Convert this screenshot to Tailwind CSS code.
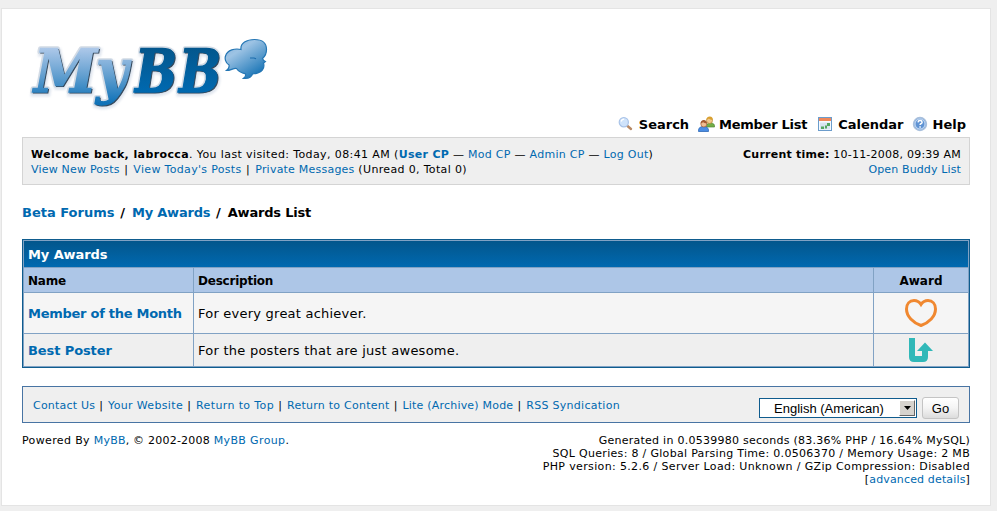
<!DOCTYPE html>
<html lang="en">
<head>
<meta charset="utf-8">
<title>Awards List</title>
<script src="https://cdn.jsdelivr.net/npm/@tailwindcss/browser@4"></script>
</head>
<body class="bg-[#efefef] h-[511px] overflow-hidden pt-2 pl-px text-black text-[11px] leading-[15px] [font-family:Verdana,'DejaVu_Sans',sans-serif]">
<div class="w-[990px] h-[498px] bg-white border border-[#e4e4e4] px-5">
  <header class="h-[128px] flex flex-col justify-between">
    <svg class="mt-[21px] block shrink-0" width="252" height="82" viewBox="22 30 252 82">
      <defs>
        <linearGradient id="my" gradientUnits="userSpaceOnUse" x1="0" y1="47" x2="0" y2="103"><stop offset="0" stop-color="#b0caea"/><stop offset=".5" stop-color="#64a0d0"/><stop offset="1" stop-color="#0f72b8"/></linearGradient>
        <linearGradient id="bb" gradientUnits="userSpaceOnUse" x1="0" y1="47" x2="0" y2="92"><stop offset="0" stop-color="#03568c"/><stop offset="1" stop-color="#0069b0"/></linearGradient>
        <linearGradient id="bub" x1="0" y1="0" x2=".7" y2="1"><stop offset="0" stop-color="#83b1d9"/><stop offset=".35" stop-color="#9dc3e4"/><stop offset="1" stop-color="#1673b5"/></linearGradient>
        <filter id="soft" x="-10%" y="-10%" width="120%" height="130%"><feGaussianBlur stdDeviation="1.1"/></filter>
        <g id="word" font-family="'DejaVu Serif Condensed','DejaVu Serif',serif" font-weight="700" font-style="italic" font-size="60">
          <text x="34" y="91.500" textLength="63" lengthAdjust="spacingAndGlyphs">M</text>
          <text x="96" y="91.500" textLength="32" lengthAdjust="spacingAndGlyphs">y</text>
          <text x="135" y="91.500" textLength="42" lengthAdjust="spacingAndGlyphs">B</text>
          <text x="179" y="91.500" textLength="42" lengthAdjust="spacingAndGlyphs">B</text>
        </g>
      </defs>
      <use href="#word" transform="translate(1 2)" fill="#c3cfe0" stroke="#c3cfe0" stroke-width="5" filter="url(#soft)" opacity=".5"/>
      <use href="#word" fill="#d3dbe5" stroke="#d3dbe5" stroke-width="4.500" stroke-linejoin="round"/>
      <use href="#word" transform="translate(1 1)" fill="#33475a" stroke="#33475a" stroke-width="1"/>
      <g font-family="'DejaVu Serif Condensed','DejaVu Serif',serif" font-weight="700" font-style="italic" font-size="60" stroke-width="1.300" aria-hidden="true">
        <text x="34" y="91.500" textLength="63" lengthAdjust="spacingAndGlyphs" fill="url(#my)" stroke="url(#my)">M</text>
        <text x="96" y="91.500" textLength="32" lengthAdjust="spacingAndGlyphs" fill="url(#my)" stroke="url(#my)">y</text>
        <text x="135" y="91.500" textLength="42" lengthAdjust="spacingAndGlyphs" fill="url(#bb)" stroke="url(#bb)">B</text>
        <text x="179" y="91.500" textLength="42" lengthAdjust="spacingAndGlyphs" fill="url(#bb)" stroke="url(#bb)">B</text>
      </g>
      <path d="M241 49.500 C240 43 247 39.500 254.500 39.500 C262 39.500 266.500 43 266.500 49.500 C266.500 54 265 56.500 262.500 58.500 C263 60 264 61 265.500 61.500 C264.500 62.800 264 63 263.500 63 C265 68 262.500 73 252.500 74 C251.500 77 248 78.800 243.500 78.300 C245.500 77 246 75.500 245.500 73.800 C242 73.200 238.500 71.500 236.500 68.500 C233 68 231 70.500 226.500 70.500 C228.500 69 229.500 67 229 65 C225 62.500 224.800 58 225.500 56 C227.500 50 235 48 241 49.500Z" fill="url(#bub)" stroke="#2476b4" stroke-width="1.200"/>
      <path d="M250 58 h4 l2 .800" fill="none" stroke="#1d6cac" stroke-width="1.200"/>
    </svg>
    <nav class="flex items-center justify-end h-[24px] pr-[4px] text-[13px] font-bold leading-[16px]">
      <svg class="mr-[5px]" width="16" height="16" viewBox="0 0 16 16"><path d="M9.500 9l3.500 3" stroke="#b88a67" stroke-width="2.400" stroke-linecap="round"/><circle cx="5.800" cy="5.200" r="4.600" fill="#cfe3fb" stroke="#a9c3e8" stroke-width="1.200"/><path d="M3.200 4.500a3 3 0 0 1 3-2.300" stroke="#fff" fill="none" stroke-width="1.300"/></svg>
      <span class="mr-[9px]">Search</span>
      <svg class="mr-[4px] -mt-[3px]" width="17" height="16" viewBox="0 0 17 16"><path d="M8.500 11q-.500-4 4-4t4 4z" fill="#73ae45" stroke="#4e8734" stroke-width=".7"/><circle cx="11.500" cy="4.500" r="3" fill="#f2c88b" stroke="#b9842e" stroke-width=".7"/><path d="M8.300 4q.300-3.500 3.500-3.500t3 3.500q-3-.500-4-1.500z" fill="#d9a030"/><path d="M.5 15.500q-.500-5 5-5t5 5z" fill="#4a8de4" stroke="#2e69b7" stroke-width=".8"/><circle cx="5.800" cy="8" r="3" fill="#f0bd91" stroke="#a25a33" stroke-width=".7"/><path d="M2.500 7.500q.300-3.500 3.300-3.500t3.200 3.500q-3-.200-3.800-1.300z" fill="#a35a30"/></svg>
      <span class="mr-[10px] tracking-[-0.27px]">Member List</span>
      <svg class="mr-[5px] -mt-[3px]" width="16" height="16" viewBox="0 0 16 16"><rect x="1.500" y="1.500" width="13" height="13" fill="#f5faff" stroke="#6c9ccb"/><path d="M2 2h12v3H2z" fill="#f0885a"/><path d="M3 6.500h10v7H3z" fill="#d8e4f0"/><path d="M10 7h3v3h-3zM8 9.500h2v3H8zM4 10.500h3v2.500H4z" fill="#55a660"/></svg>
      <span class="mr-[8px]">Calendar</span>
      <svg class="mr-[5px] -mt-[3px]" width="16" height="16" viewBox="0 0 16 16"><circle cx="8" cy="8" r="6.500" fill="#7caae0" stroke="#a8bfdc" stroke-width="1.400"/><circle cx="8" cy="8" r="5" fill="#5f93d3" stroke="#e3eefb" stroke-width=".800"/><path d="M6 6.400q.200-1.800 2.100-1.800t2 1.600q0 1-1.200 1.500-.800.400-.800 1.200M8.100 10.300v1.400" fill="none" stroke="#fff" stroke-width="1.500"/></svg>
      <span>Help</span>
    </nav>
  </header>

  <section class="h-[48px] border border-[#d4d4d4] bg-[#efefef] px-2 pt-[9px] flex justify-between whitespace-nowrap">
    <div>
      <p class="tracking-[0.39px]"><b>Welcome back, labrocca</b>. You last visited: Today, 08:41 AM (<a class="text-[#0069b0] font-bold tracking-[0.3px]">User CP</a><span class="tracking-[0.28px]"> — <a class="text-[#0069b0]">Mod CP</a> — <a class="text-[#0069b0]">Admin CP</a> — <a class="text-[#0069b0]">Log Out</a>)</span></p>
      <p class="tracking-[1px]"><a class="text-[#0069b0] tracking-[0.2px]">View New Posts</a> | <a class="text-[#0069b0] tracking-[0.32px]">View Today's Posts</a> | <a class="text-[#0069b0] tracking-[0.22px]">Private Messages</a><span class="tracking-[0.34px]"> (Unread 0, Total 0)</span></p>
    </div>
    <div class="text-right tracking-[0.23px]">
      <p><b>Current time:</b> 10-11-2008, 09:39 AM</p>
      <p><a class="text-[#0069b0] tracking-[0.13px]">Open Buddy List</a></p>
    </div>
  </section>

  <div class="h-[54px] pt-[20px] text-[13px] leading-[16px] font-bold tracking-[1.2px]"><a class="text-[#0069b0] tracking-normal">Beta Forums</a> / <a class="text-[#0069b0] tracking-[-0.2px]">My Awards</a> / <span class="tracking-[-0.2px]">Awards List</span></div>

  <section class="h-[129px] bg-[#81a2c4] border border-[#0f5c8e] p-px grid grid-cols-[169px_679px_94px] grid-rows-[26px_24px_40px_32px] gap-px text-[13px] leading-[16px]">
    <div class="col-span-3 flex items-center pl-1 pt-[2px] font-bold tracking-[-0.1px] text-white bg-linear-to-b from-[#03568c] to-[#0069b0]">My Awards</div>
    <div class="bg-[#adc6e7] flex items-center pl-1 pt-[2px] font-bold text-[12px] tracking-[-0.2px]">Name</div>
    <div class="bg-[#adc6e7] flex items-center pl-1 pt-[2px] font-bold text-[12px] tracking-[-0.22px]">Description</div>
    <div class="bg-[#adc6e7] flex items-center justify-center pt-[2px] font-bold text-[12px]">Award</div>
    <div class="bg-[#f5f5f5] flex items-center pl-1 pt-[2px] font-bold tracking-[-0.27px] text-[#0069b0]">Member of the Month</div>
    <div class="bg-[#f5f5f5] flex items-center pl-1 pt-[2px] tracking-[0.23px]">For every great achiever.</div>
    <div class="bg-[#f5f5f5] flex items-center justify-center"><svg width="34" height="30" viewBox="0 0 34 30"><path d="M17 6.500 C15 3.500 12.500 2.500 10 2.500 C5.500 2.500 2.500 6 2.500 11 C2.500 18.500 9 24.500 17 27.500 C25 24.500 31.500 18.500 31.500 11 C31.500 6 28.500 2.500 24 2.500 C21.500 2.500 19 3.500 17 6.500Z" fill="none" stroke="#f08830" stroke-width="3"/></svg></div>
    <div class="bg-[#efefef] flex items-center pl-1 pt-[2px] font-bold tracking-[-0.1px] text-[#0069b0]">Best Poster</div>
    <div class="bg-[#efefef] flex items-center pl-1 pt-[2px] tracking-[0.25px]">For the posters that are just awesome.</div>
    <div class="bg-[#efefef] flex items-center justify-center"><svg width="24" height="24" viewBox="0 0 24 24"><path d="M0 0h6v18h7v-5H8l8-8.500 8 8.500h-5v6q0 5-5 5H5q-5 0-5-5z" fill="#30b8b8"/></svg></div>
  </section>

  <section class="mt-[18px] h-[37px] border border-[#4874a3] bg-[#efefef] pl-[10px] pr-[10px] flex items-center">
    <p class="grow pt-[2px] tracking-[0.75px]"><a class="text-[#0069b0] tracking-[0.2px]">Contact Us</a> | <a class="text-[#0069b0] tracking-[0.35px]">Your Website</a> | <a class="text-[#0069b0] tracking-[0.38px]">Return to Top</a> | <a class="text-[#0069b0] tracking-[0.25px]">Return to Content</a> | <a class="text-[#0069b0] tracking-[0.2px]">Lite (Archive) Mode</a> | <a class="text-[#0069b0] tracking-[0.28px]">RSS Syndication</a></p>
    <div class="mt-[6px] w-[158px] h-5 bg-white border border-[#0f5c8e] flex items-center justify-between pl-[14px] pr-px text-[13px] [font-family:'Liberation_Sans',Arial,sans-serif]">
      <span class="whitespace-nowrap pt-px">English (American)</span>
      <span class="w-4 h-4 bg-[#d6d3ce] border border-t-white border-l-white border-r-[#666] border-b-[#666] flex items-center justify-center"><svg width="7" height="4" viewBox="0 0 7 4"><path d="M0 0h7L3.500 4z"/></svg></span>
    </div>
    <div class="mt-[6px] ml-[5px] w-[37px] h-[22px] rounded-[3px] border border-[#c4c4c4] bg-linear-to-b from-white via-[#f4f4f4] to-[#dcdcdc] flex items-center justify-center pt-px text-[13px] [font-family:'Liberation_Sans',Arial,sans-serif]">Go</div>
  </section>

  <footer class="pt-[11px] flex justify-between leading-[13px] whitespace-nowrap">
    <p class="tracking-[0.36px]">Powered By <a class="text-[#0069b0] tracking-[0.2px]">MyBB</a><span class="tracking-[0.22px]">, © 2002-2008 </span><a class="text-[#0069b0]">MyBB Group</a>.</p>
    <div class="text-right">
      <p class="tracking-[0.26px]">Generated in 0.0539980 seconds (83.36% PHP / 16.64% MySQL)</p>
      <p class="tracking-[0.31px]">SQL Queries: 8 / Global Parsing Time: 0.0506370 / Memory Usage: 2 MB</p>
      <p class="tracking-[0.36px]">PHP version: 5.2.6 / Server Load: Unknown / GZip Compression: Disabled</p>
      <p class="tracking-[0.15px]">[<a class="text-[#0069b0]">advanced details</a>]</p>
    </div>
  </footer>
</div>
</body>
</html>
